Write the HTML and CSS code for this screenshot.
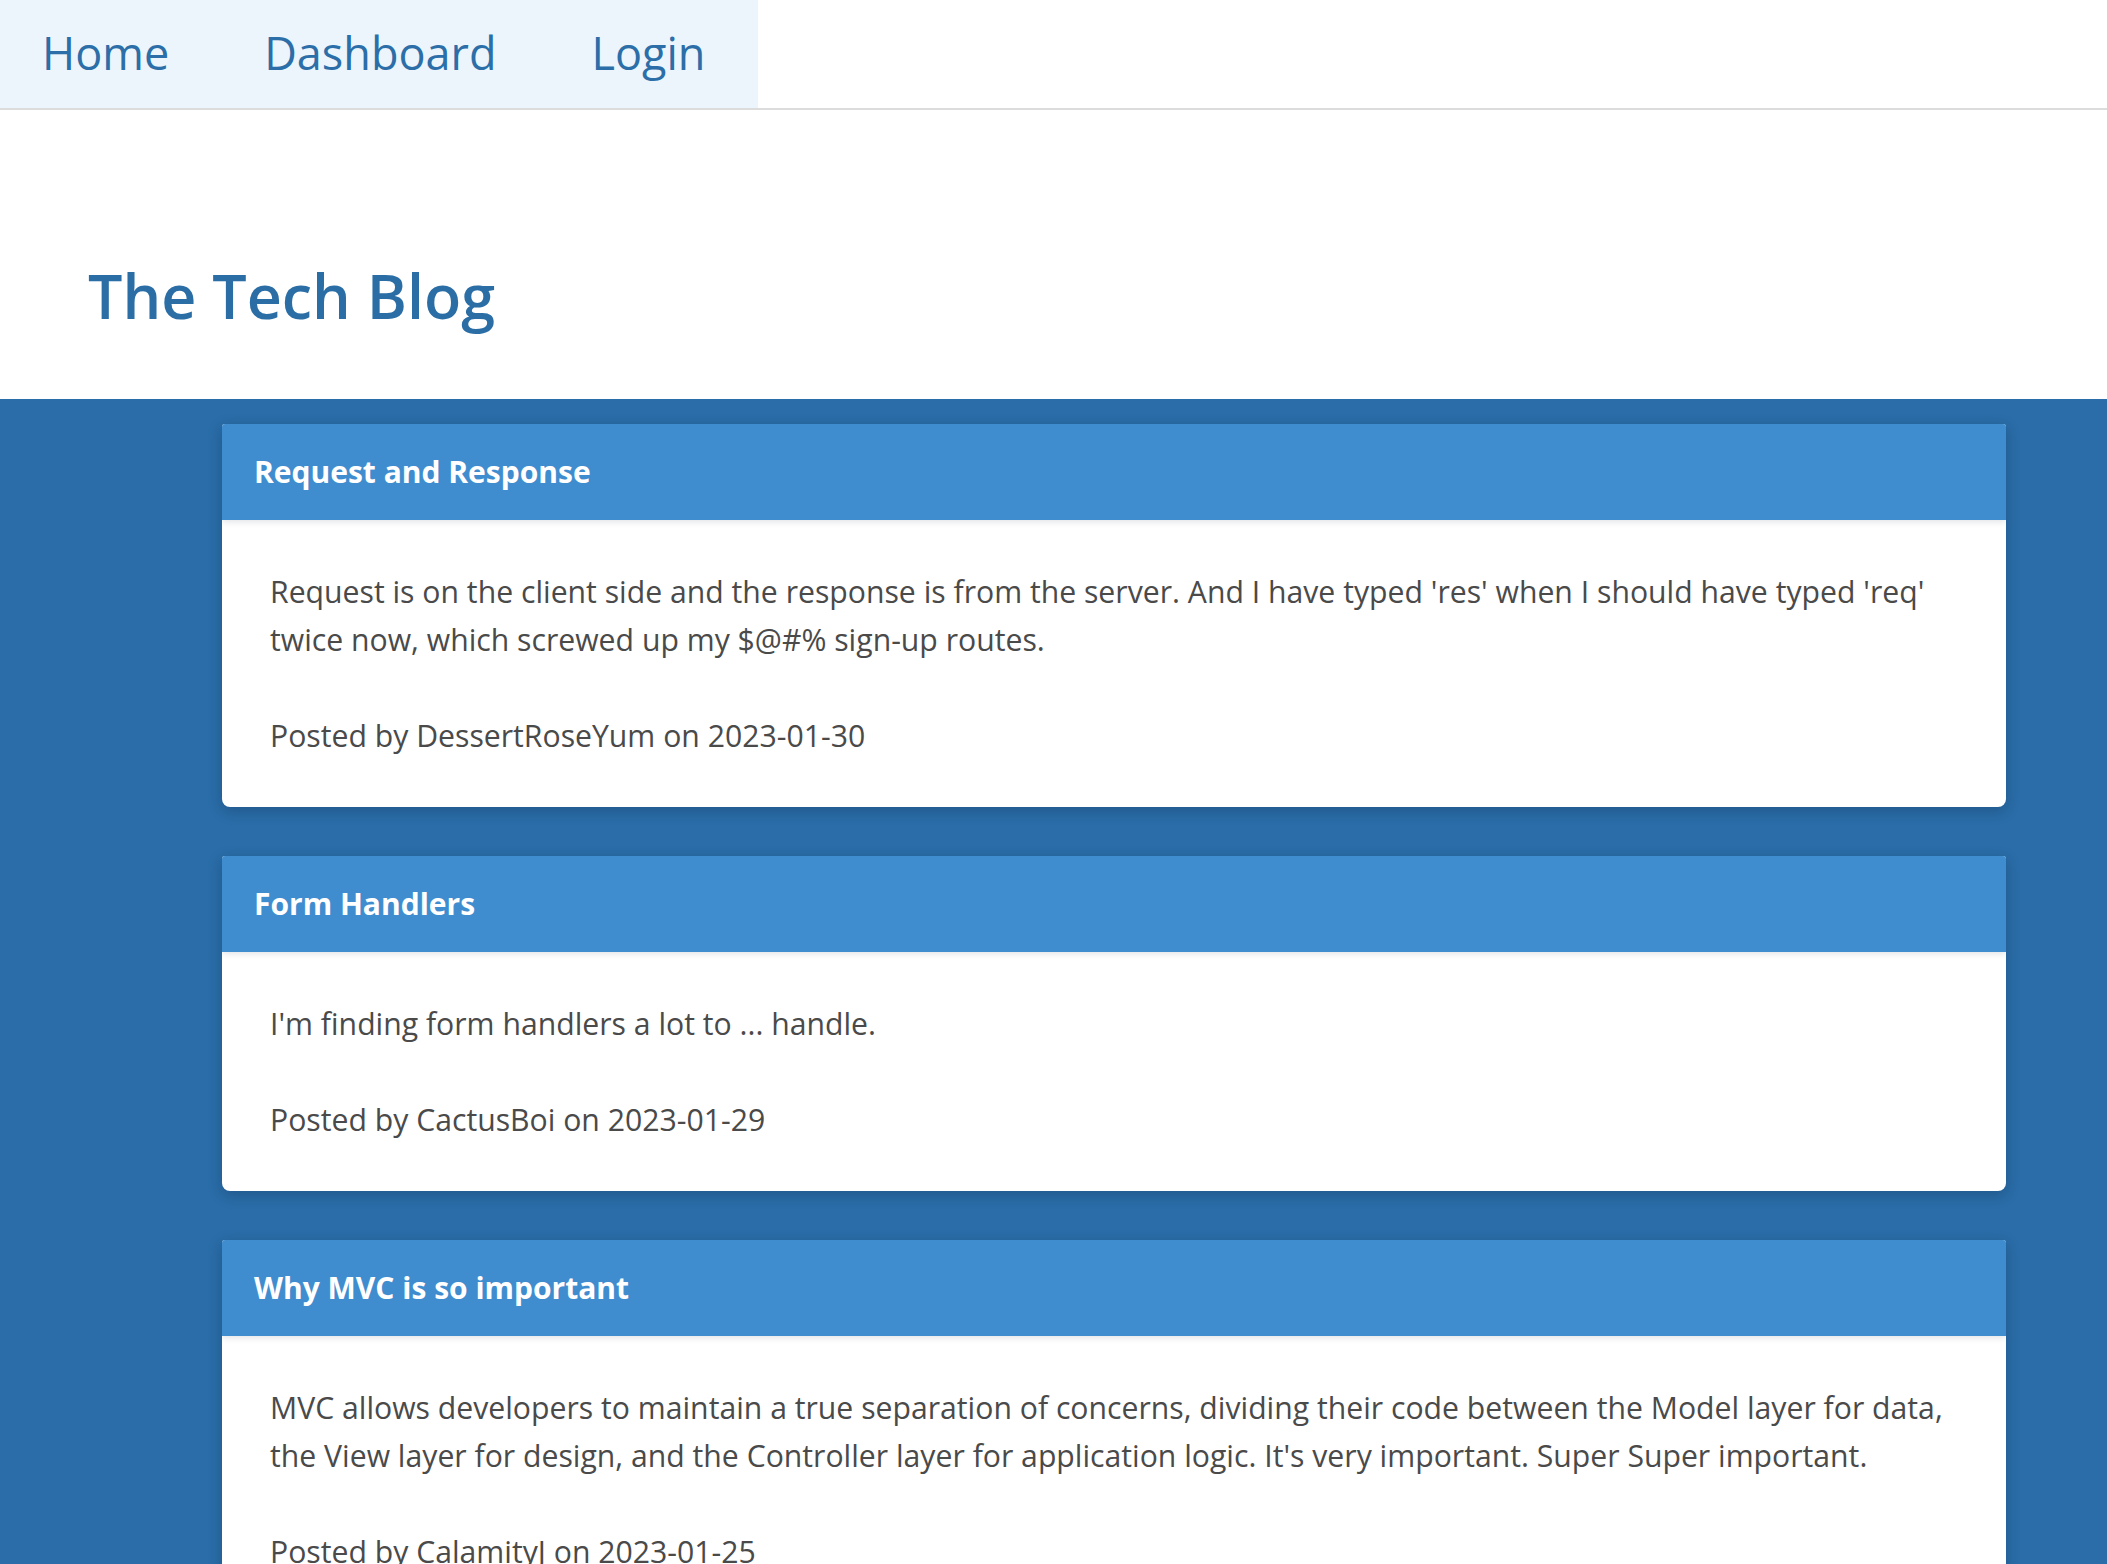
FILE: index.html
```html
<!DOCTYPE html>
<html lang="en">
<head>
<meta charset="utf-8">
<title>The Tech Blog</title>
<link rel="stylesheet" href="styles.css">
</head>
<body>
<header class="site-header">
  <nav class="nav">
    <a class="nav-link" href="#">Home</a>
    <a class="nav-link" href="#">Dashboard</a>
    <a class="nav-link" href="#">Login</a>
  </nav>
</header>
<section class="hero">
  <h1 class="title">The Tech Blog</h1>
</section>
<main class="posts">
  <article class="card">
    <h2 class="card-header">Request and Response</h2>
    <div class="card-body">
      <p>Request is on the client side and the response is from the server. And I have typed 'res' when I should have typed 'req' twice now, which screwed up my $@#% sign-up routes.</p>
      <p>Posted by DessertRoseYum on 2023-01-30</p>
    </div>
  </article>
  <article class="card">
    <h2 class="card-header">Form Handlers</h2>
    <div class="card-body">
      <p>I'm finding form handlers a lot to ... handle.</p>
      <p>Posted by CactusBoi on 2023-01-29</p>
    </div>
  </article>
  <article class="card">
    <h2 class="card-header">Why MVC is so important</h2>
    <div class="card-body">
      <p>MVC allows developers to maintain a true separation of concerns, dividing their code between the Model layer for data, the View layer for design, and the Controller layer for application logic. It's very important. Super Super important.</p>
      <p>Posted by CalamityJ on 2023-01-25</p>
    </div>
  </article>
</main>
</body>
</html>
```
FILE: styles.css
```css
* { box-sizing: border-box; }
html, body { margin: 0; padding: 0; }
body {
  font-family: "Open Sans", "Noto Sans", Arial, sans-serif;
  background: #2a6da8;
  color: #4a4a4a;
}
.site-header {
  background: #ffffff;
  border-bottom: 2px solid #dcdcdc;
  height: 110px;
}
.nav {
  display: inline-flex;
  height: 108px;
  background: #edf5fc;
}
.nav-link {
  display: flex;
  align-items: center;
  padding: 0 53px 4px 42px;
  font-size: 45px;
  color: #2b6ea8;
  text-decoration: none;
}
.hero {
  background: #ffffff;
  height: 289px;
  padding: 150px 0 0 88px;
}
.title {
  margin: 0;
  font-size: 61px;
  line-height: 72px;
  font-weight: 600;
  color: #2b6ea6;
}
.posts {
  display: flex;
  flex-direction: column;
  gap: 49px;
  padding: 25px 101px 40px 222px;
}
.card {
  background: #ffffff;
  border-radius: 3px 3px 8px 8px;
  box-shadow: 0 4px 14px rgba(10, 30, 60, 0.28);
  overflow: hidden;
}
.card-header {
  margin: 0;
  height: 96px;
  display: flex;
  align-items: center;
  padding: 0 32px 2px;
  background: #3f8dcf;
  color: #ffffff;
  font-size: 30px;
  font-weight: 700;
  box-shadow: 0 2px 6px rgba(10, 30, 60, 0.12);
  position: relative;
}
.card-body {
  padding: 48px 48px 47px;
  display: flex;
  flex-direction: column;
  gap: 48px;
}
.card-body p {
  margin: 0;
  font-size: 30.2px;
  line-height: 48px;
}
```
